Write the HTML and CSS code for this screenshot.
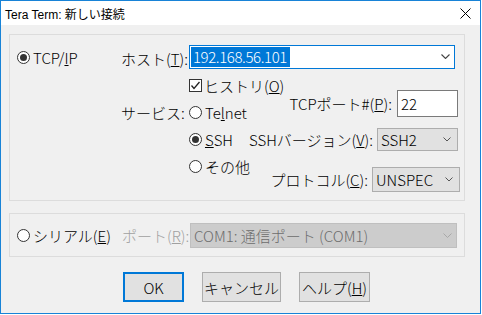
FILE: index.html
```html
<!doctype html>
<html>
<head>
  <link rel="stylesheet" href="styles.css">
</head>
<body>
<div class="window">
  <div class="titlebar">
    <span class="title">Tera Term: 新しい接続</span>
    <svg class="close" width="11" height="11" viewBox="0 0 11 11"><path d="M0.5 0.5 L10.5 10.5 M10.5 0.5 L0.5 10.5" stroke="#000" stroke-width="1" fill="none"/></svg>
  </div>

  <div class="content">
    <div class="group group-tcp">
      <div class="proto-col">
        <div class="opt-item"><span class="radio checked"></span>TCP/<u>I</u>P</div>
      </div>

      <div class="tcp-main">
        <div class="host-row">
          <span class="lbl">ホスト(<u>T</u>):</span>
          <div class="combo host">
            <span class="selected">192.168.56.101</span>
            <svg class="chev" width="9" height="5" viewBox="0 0 9 5"><path d="M0.5 0.5 L4.5 4.5 L8.5 0.5" stroke="#444" stroke-width="1.1" fill="none"/></svg>
          </div>
        </div>

        <div class="service-row">
          <span class="lbl service-lbl">サービス:</span>
          <div class="service-list">
            <div class="opt-item">
              <span class="checkbox">
                <svg width="11" height="11" viewBox="0 0 11 11"><path d="M1.5 5.5 L4 8.5 L9.5 2" stroke="#222" stroke-width="1.3" fill="none"/></svg>
              </span>ヒストリ(<u>O</u>)
            </div>
            <div class="opt-item"><span class="radio"></span>Te<u>l</u>net</div>
            <div class="opt-item"><span class="radio checked"></span><u>S</u>SH</div>
            <div class="opt-item"><span class="radio"></span>その他</div>
          </div>

          <div class="service-opts">
            <div class="opt port-opt">
              <span>TCPポート#(<u>P</u>):</span>
              <div class="edit port">22</div>
            </div>
            <div class="opt ver-opt">
              <span>SSHバージョン(<u>V</u>):</span>
              <div class="dropdown ver">SSH2
                <svg class="chev" width="8" height="5" viewBox="0 0 8 5"><path d="M0.5 0.5 L4 4 L7.5 0.5" stroke="#555" stroke-width="1" fill="none"/></svg>
              </div>
            </div>
            <div class="opt protocol-opt">
              <span>プロトコル(<u>C</u>):</span>
              <div class="dropdown protocol">UNSPEC
                <svg class="chev" width="8" height="5" viewBox="0 0 8 5"><path d="M0.5 0.5 L4 4 L7.5 0.5" stroke="#555" stroke-width="1" fill="none"/></svg>
              </div>
            </div>
          </div>
        </div>
      </div>
    </div>

    <div class="group group-serial">
      <div class="proto-col">
        <div class="opt-item"><span class="radio"></span>シリアル(<u>E</u>)</div>
      </div>
      <span class="lbl disabled">ポート(<u>R</u>):</span>
      <div class="combo com disabled-box">
        <span>COM1: 通信ポート (COM1)</span>
        <svg class="chev" width="9" height="5" viewBox="0 0 9 5"><path d="M0.5 0.5 L4.5 4.5 L8.5 0.5" stroke="#a8a8a8" stroke-width="1" fill="none"/></svg>
      </div>
    </div>

    <div class="buttons">
      <button class="btn ok">OK</button>
      <button class="btn cancel">キャンセル</button>
      <button class="btn help">ヘルプ(<u>H</u>)</button>
    </div>
  </div>
</div>
</body>
</html>
```

FILE: styles.css
```css
* {
  margin: 0;
  padding: 0;
  box-sizing: border-box;
}

body {
  background: #fff;
  font-family: "Noto Sans CJK JP", "Noto Sans", sans-serif;
  font-size: 15px;
  font-weight: 300;
  color: #000;
}

.window {
  width: 481px;
  height: 314px;
  border: 1px solid #1883d7;
  background: #f0f0f0;
}

.titlebar {
  height: 24px;
  background: #fff;
  display: flex;
  align-items: center;
  justify-content: space-between;
  padding: 0 9px 0 4px;
}

.title {
  font-family: "Liberation Sans", "Noto Sans CJK JP", sans-serif;
  font-size: 12px;
  font-weight: 400;
}

.close {
  display: block;
  margin-top: 1px;
}

.content {
  padding: 9px 15px 0 8px;
}

.group {
  border: 1px solid #dcdcdc;
  display: flex;
}

.group-tcp {
  height: 167px;
}

.proto-col {
  width: 113px;
  padding-left: 7px;
}

.group-tcp .proto-col {
  padding-top: 9px;
}

.opt-item {
  display: flex;
  align-items: center;
  height: 27px;
  white-space: nowrap;
}

.radio {
  width: 13px;
  height: 13px;
  border: 1px solid #333;
  border-radius: 50%;
  background: #fff;
  margin-right: 3px;
  display: flex;
  align-items: center;
  justify-content: center;
  flex-shrink: 0;
}

.radio.checked::after {
  content: "";
  width: 7px;
  height: 7px;
  border-radius: 50%;
  background: #333;
}

.checkbox {
  width: 13px;
  height: 13px;
  border: 1px solid #333;
  background: #fff;
  margin-right: 2px;
  display: flex;
  align-items: center;
  justify-content: center;
  flex-shrink: 0;
}

.checkbox svg {
  display: block;
}

.tcp-main {
  flex: 1;
  padding-top: 9px;
}

.lbl {
  width: 68px;
  flex-shrink: 0;
  white-space: nowrap;
}

.host-row {
  display: flex;
  align-items: center;
}

.host-row .lbl {
  margin-top: 4px;
}

.combo {
  height: 24px;
  background: #fff;
  display: flex;
  align-items: center;
  justify-content: space-between;
  padding: 0 4px 0 1px;
}

.combo.host {
  width: 266px;
  border: 1px solid #0078d7;
}

.selected {
  background: #0078d7;
  color: #fff;
  padding: 0 3px 0 2px;
  line-height: 20px;
  letter-spacing: -0.4px;
}

.chev {
  display: block;
}

.service-row {
  display: flex;
}

.service-lbl {
  margin-top: 30px;
  line-height: 27px;
}

.service-list {
  margin-top: 3px;
  width: 60px;
}

.service-opts {
  flex: 1;
  margin-top: 21px;
  display: flex;
  flex-direction: column;
  align-items: flex-end;
  padding-right: 5px;
}

.opt {
  display: flex;
  align-items: center;
  white-space: nowrap;
}

.edit {
  height: 27px;
  background: #fff;
  border: 1px solid #7a7a7a;
  padding-left: 3px;
  line-height: 25px;
}

.edit.port {
  width: 61px;
  margin-left: 5px;
  margin-right: 1px;
}

.dropdown {
  background: #e1e1e1;
  border: 1px solid #adadad;
  display: flex;
  align-items: center;
  justify-content: space-between;
  padding: 0 6px 0 3px;
}

.ver-opt {
  margin-top: 11px;
  margin-right: 1px;
}

.dropdown.ver {
  width: 81px;
  height: 23px;
  margin-left: 4px;
}

.protocol-opt {
  margin-top: 16px;
  margin-right: -1px;
}

.dropdown.protocol {
  width: 88px;
  height: 25px;
  margin-left: 4px;
}

.group-serial {
  margin-top: 12px;
  height: 44px;
  align-items: center;
}

.group-serial .proto-col {
  width: 112px;
}

.disabled {
  color: #a0a0a0;
}

.combo.com {
  width: 267px;
  height: 25px;
}

.disabled-box {
  background: #cccccc;
  border: 1px solid #bfbfbf;
  color: #6d6d6d;
  padding-left: 3px;
}

.buttons {
  display: flex;
  gap: 18px;
  padding-left: 114px;
  margin-top: 15px;
}

.btn {
  height: 30px;
  background: #e1e1e1;
  border: 1px solid #adadad;
  font-family: "Noto Sans CJK JP", "Noto Sans", sans-serif;
  font-size: 15px;
  font-weight: 300;
  color: #000;
}

.btn.ok {
  width: 61px;
  border: 2px solid #0078d7;
}

.btn.cancel {
  width: 79px;
}

.btn.help {
  width: 71px;
}
```
